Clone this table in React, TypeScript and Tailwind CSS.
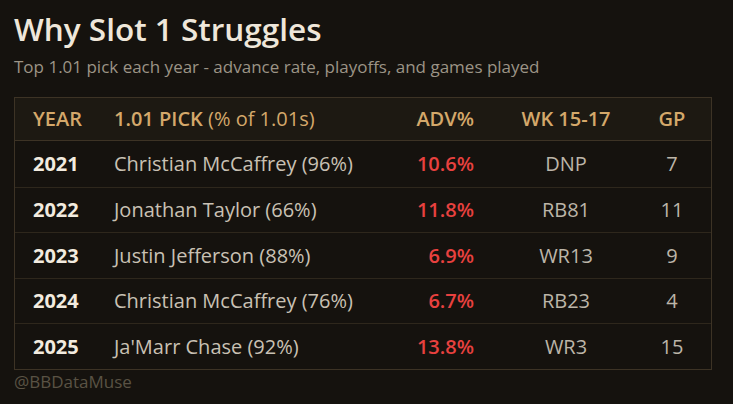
export default function App()
{
    const rows = [
        { year: "2021", pick: "Christian McCaffrey (96%)", adv: "10.6%", wk: "DNP", gp: "7" },
        { year: "2022", pick: "Jonathan Taylor (66%)", adv: "11.8%", wk: "RB81", gp: "11" },
        { year: "2023", pick: "Justin Jefferson (88%)", adv: "6.9%", wk: "WR13", gp: "9" },
        { year: "2024", pick: "Christian McCaffrey (76%)", adv: "6.7%", wk: "RB23", gp: "4" },
        { year: "2025", pick: "Ja'Marr Chase (92%)", adv: "13.8%", wk: "WR3", gp: "15" },
    ];

    const cols = "grid grid-cols-[99px_270px_90px_184px_28px] items-center";

    return (
        <div className="w-[733px] h-[404px] bg-[#15120e] font-['Open_Sans',sans-serif] px-[14px] pt-[10px]">
            <h1 className="text-[31.5px] font-semibold text-[#efe7da] leading-[38px]">Why Slot 1 Struggles</h1>
            <p className="text-[17px] text-[#9c9486] mt-[8px] leading-[22px]">Top 1.01 pick each year - advance rate, playoffs, and games played</p>
            <div className="mt-[19px] w-[698px] border border-[#3d3325]">
                <div className={cols + " h-[43px] bg-[#1d1912] border-b border-[#3d3325] text-[20px] text-[#d4a86a]"}>
                    <div className="pl-[18px] font-semibold">YEAR</div>
                    <div className="whitespace-nowrap"><span className="font-semibold">1.01 PICK</span> (% of 1.01s)</div>
                    <div className="text-right font-semibold">ADV%</div>
                    <div className="text-center font-semibold">WK 15-17</div>
                    <div className="text-center font-semibold">GP</div>
                </div>
                {rows.map((r, i) => (
                    <div key={r.year} className={cols + " h-[45.5px] text-[20px] pt-[1px] " + (i > 0 ? "border-t border-[#2e271c]" : "")}>
                        <div className="pl-[18px] font-bold text-[#f2ebdf]">{r.year}</div>
                        <div className="text-[#c9c1b4] whitespace-nowrap">{r.pick}</div>
                        <div className="text-right font-semibold text-[#e8413f]">{r.adv}</div>
                        <div className="text-center text-[#bcb5a8]">{r.wk}</div>
                        <div className="text-center text-[#bcb5a8]">{r.gp}</div>
                    </div>
                ))}
            </div>
            <div className="text-[17px] text-[#5a5244] leading-[22px] mt-[1px]">@BBDataMuse</div>
        </div>
    );
}
